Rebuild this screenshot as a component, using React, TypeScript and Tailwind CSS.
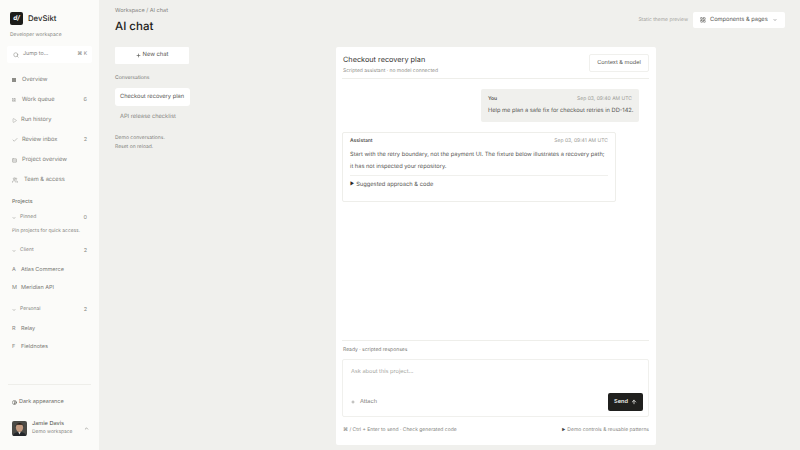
import { ChevronDown, ChevronUp, Search, LayoutGrid, ArrowUp, Plus, Check, Play, Contrast, Users, Rows3 } from "lucide-react";

const font = { fontFamily: "Inter, sans-serif" };

function NavRow({ icon, label, count, iconW = "w-[10px]" }: { icon: React.ReactNode; label: string; count?: string; iconW?: string }) {
  return (
    <div className="flex items-center h-[20px] pl-[12px] pr-[12px] text-[5.7px] text-[#7a7a75]">
      <span className={`${iconW} flex items-center text-[#8d8d88]`}>{icon}</span>
      <span className="flex-1">{label}</span>
      {count && <span className="text-[5.5px] text-[#8a8a85]">{count}</span>}
    </div>
  );
}

function GroupRow({ label, count }: { label: string; count: string }) {
  return (
    <div className="flex items-center h-[14px] pl-[12px] pr-[12px] text-[5px] text-[#85857f]">
      <ChevronDown className="w-[4px] h-[4px] mr-[4px]" strokeWidth={3} />
      <span className="flex-1">{label}</span>
      <span className="text-[5.5px]">{count}</span>
    </div>
  );
}

function ProjectRow({ letter, label }: { letter: string; label: string }) {
  return (
    <div className="flex items-center h-[18px] pl-[12px] text-[5.5px] text-[#7a7a75]">
      <span className="w-[9px] text-[5.5px] text-[#85857f]">{letter}</span>
      <span>{label}</span>
    </div>
  );
}

function Sidebar() {
  return (
    <aside className="w-[99px] h-full shrink-0 bg-[#fbfbf9] flex flex-col">
      <div className="flex items-center gap-[5px] pl-[10px] pt-[12px]">
        <div className="w-[13px] h-[13px] rounded-[2px] bg-[#1c1c1a] flex items-center justify-center text-[6.5px] italic font-bold text-white">d/</div>
        <span className="text-[7.75px] font-medium text-[#2a2a28]">DevSikt</span>
      </div>
      <div className="pl-[10px] mt-[6px] text-[5px] text-[#85857f] leading-[8px]">Developer workspace</div>
      <div className="mx-[7px] mt-[7px] h-[17px] rounded-[2px] bg-white flex items-center pl-[6px] pr-[5px] text-[5.4px] text-[#85857f]">
        <Search className="w-[6px] h-[6px] mr-[4px]" />
        <span className="flex-1">Jump to...</span>
        <span className="text-[5px]">⌘ K</span>
      </div>
      <div className="mt-[7px]">
        <NavRow icon={<span className="block w-[4px] h-[4px] bg-[#8d8d88]" />} label="Overview" />
        <NavRow icon={<LayoutGrid className="w-[4px] h-[4px]" />} label="Work queue" count="6" />
        <NavRow icon={<Play className="w-[5px] h-[5px]" />} iconW="w-[9px]" label="Run history" />
        <NavRow icon={<Check className="w-[6px] h-[6px]" />} label="Review inbox" count="2" />
        <NavRow icon={<Rows3 className="w-[5px] h-[5px]" />} label="Project overview" />
        <NavRow icon={<Users className="w-[6px] h-[6px]" />} iconW="w-[12px]" label="Team & access" />
      </div>
      <div className="pl-[12px] mt-[7px] text-[5.25px] font-medium text-[#6f6f6a] leading-[10px]">Projects</div>
      <div className="mt-[4px]">
        <GroupRow label="Pinned" count="0" />
        <div className="pl-[12px] text-[4.9px] text-[#85857f] leading-[10px] mt-[1px] mb-[8px]">Pin projects for quick access.</div>
        <GroupRow label="Client" count="2" />
        <div className="mt-[3px]">
          <ProjectRow letter="A" label="Atlas Commerce" />
          <ProjectRow letter="M" label="Meridian API" />
        </div>
        <div className="mt-[6px]">
          <GroupRow label="Personal" count="2" />
        </div>
        <div className="mt-[3px]">
          <ProjectRow letter="R" label="Relay" />
          <ProjectRow letter="F" label="Fieldnotes" />
        </div>
      </div>
      <div className="mt-auto mx-[8px] border-t border-[#eeeeea]" />
      <div className="flex items-center gap-[2px] pl-[12px] h-[16px] mt-[9px] text-[5.5px] text-[#6f6f6a]">
        <Contrast className="w-[5px] h-[5px]" strokeWidth={3} />
        <span>Dark appearance</span>
      </div>
      <div className="flex items-center pl-[12px] pr-[10px] mt-[10px] mb-[14px]">
        <svg viewBox="0 0 15 15" className="w-[15px] h-[15px] rounded-[2px] shrink-0">
          <rect width="15" height="15" fill="#4a4a46" />
          <ellipse cx="7.5" cy="6.5" rx="3.6" ry="4.6" fill="#c39a80" />
          <path d="M3.6 6 C3 0.8 12 0.8 11.4 6 L10.6 3.8 L4.4 3.8 Z" fill="#1f1a16" />
          <path d="M1 15 C1 12 4.5 11 7.5 11 C10.5 11 14 12 14 15 Z" fill="#23262a" />
          <path d="M6.3 11 L7.5 13.5 L8.7 11 Z" fill="#e6e4df" />
        </svg>
        <div className="ml-[5px] flex-1 leading-none">
          <div className="text-[5.6px] text-[#4a4a46] leading-[9px]">Jamie Davis</div>
          <div className="text-[4.9px] text-[#85857f] leading-[7px]">Demo workspace</div>
        </div>
        <ChevronUp className="w-[5px] h-[5px] text-[#85857f]" strokeWidth={3} />
      </div>
    </aside>
  );
}

function ChatPanel() {
  return (
    <section className="w-[320px] h-[398px] bg-white rounded-[2px] flex flex-col pl-[6px] pr-[7px] pb-[11px]">
      <div className="flex items-start justify-between h-[32px] border-b border-[#eeeeea] pl-[1px]">
        <div className="pt-[7px]">
          <div className="text-[7.3px] text-[#333331] leading-[11px]">Checkout recovery plan</div>
          <div className="text-[5px] text-[#8f8f8a] mt-[3px] leading-[7px]">Scripted assistant · no model connected</div>
        </div>
        <div className="mt-[7px] w-[60px] h-[18px] border border-[#f0f0ed] rounded-[2px] flex items-center justify-center text-[5.6px] text-[#555551]">Context & model</div>
      </div>
      <div className="flex-1">
        <div className="flex justify-end mt-[10px] mr-[10px]">
          <div className="w-[158px] h-[33px] bg-[#f0f0ed] rounded-[2px] px-[7px] pt-[6px]">
            <div className="flex justify-between text-[5px] leading-[8px]">
              <span className="font-semibold text-[#555551]">You</span>
              <span className="text-[#9a9a95]">Sep 03, 09:40 AM UTC</span>
            </div>
            <div className="text-[5.7px] text-[#555551] mt-[3px] leading-[9px] whitespace-nowrap">Help me plan a safe fix for checkout retries in DD-142.</div>
          </div>
        </div>
        <div className="mt-[10px] w-[274px] h-[70px] border border-[#eeeeea] rounded-[2px] px-[7px] pt-[4px]">
          <div className="flex justify-between text-[5px] leading-[8px]">
            <span className="font-semibold text-[#555551]">Assistant</span>
            <span className="text-[#9a9a95]">Sep 03, 09:41 AM UTC</span>
          </div>
          <div className="text-[5.7px] text-[#555551] leading-[11.5px] mt-[4px] whitespace-nowrap">
            <div>Start with the retry boundary, not the payment UI. The fixture below illustrates a recovery path;</div>
            <div>it has not inspected your repository.</div>
          </div>
          <div className="border-t border-[#f0f0ed] mt-[3px] pt-[4px] flex items-center text-[5.75px] text-[#555551] leading-[10px]">
            <span className="mr-[2px] text-[4.5px] text-[#2a2a28]">▶</span>
            Suggested approach & code
          </div>
        </div>
      </div>
      <div className="border-t border-[#eeeeea] pt-[5px]">
        <div className="pl-[1px] text-[5px] text-[#777772] leading-[8px]">Ready · scripted responses</div>
        <div className="mt-[5px] h-[58px] border border-[#f0f0ed] rounded-[2px] flex flex-col justify-between pl-[8px] pr-[5px] py-[5px]">
          <div className="text-[5.6px] text-[#a5a5a0] mt-[3px] leading-[9px]">Ask about this project...</div>
          <div className="flex items-center justify-between">
            <div className="flex items-center text-[5.6px] text-[#777772]">
              <Plus className="w-[4px] h-[4px] mr-[5px]" strokeWidth={3} />
              Attach
            </div>
            <div className="w-[35px] h-[18px] rounded-[2px] bg-[#20201e] flex items-center justify-center gap-[3px] text-[5.6px] font-semibold text-[#f0f0ed]">
              Send
              <ArrowUp className="w-[6px] h-[6px]" strokeWidth={3} />
            </div>
          </div>
        </div>
        <div className="flex justify-between pl-[1px] text-[5px] text-[#85857f] mt-[9px] leading-[8px]">
          <span>⌘ / Ctrl + Enter to send · Check generated code</span>
          <span><span className="text-[4px] text-[#444] mr-[2px]">▶</span>Demo controls & reusable patterns</span>
        </div>
      </div>
    </section>
  );
}

export default function App() {
  return (
    <div className="w-[800px] h-[450px] flex overflow-hidden bg-[#f0f0ed] [text-rendering:geometricPrecision] antialiased opacity-[0.999]" style={font}>
      <Sidebar />
      <main className="flex-1 pl-[16px] pr-[15px]">
        <div className="flex justify-between h-[47px]">
          <div className="pt-[7px]">
            <div className="text-[5.55px] text-[#85857f] leading-[8px]">Workspace / AI chat</div>
            <h1 className="text-[11.5px] font-medium text-[#1c1c1a] leading-[16px] mt-[3px]">AI chat</h1>
          </div>
          <div className="flex items-start gap-[5px] pt-[12px]">
            <span className="text-[5px] text-[#a5a5a0] leading-[16px]">Static theme preview</span>
            <div className="w-[92px] h-[16px] bg-white rounded-[2px] flex items-center pl-[7px] text-[5.7px] text-[#555551]">
              <LayoutGrid className="w-[6px] h-[6px] mr-[4px]" />
              <span>Components & pages</span>
              <ChevronDown className="w-[4px] h-[4px] ml-[5px]" strokeWidth={3} />
            </div>
          </div>
        </div>
        <div className="flex">
          <div className="w-[74px] mr-[147px]">
            <div className="h-[17px] bg-white rounded-[1px] flex items-center justify-center gap-[2px] text-[5.8px] text-[#555551]">
              <Plus className="w-[5px] h-[5px]" strokeWidth={3} />
              New chat
            </div>
            <div className="text-[5.1px] text-[#777772] mt-[10px] leading-[8px]">Conversations</div>
            <div className="mt-[6px] h-[18px] w-[75px] bg-white rounded-[3px] flex items-center pl-[5px] text-[5.7px] text-[#555551] whitespace-nowrap">Checkout recovery plan</div>
            <div className="mt-[2px] h-[18px] flex items-center pl-[5px] text-[5.7px] text-[#85857f] whitespace-nowrap">API release checklist</div>
            <div className="mt-[8px] text-[5px] text-[#85857f] leading-[8.5px]">Demo conversations.<br />Reset on reload.</div>
          </div>
          <ChatPanel />
        </div>
      </main>
    </div>
  );
}
